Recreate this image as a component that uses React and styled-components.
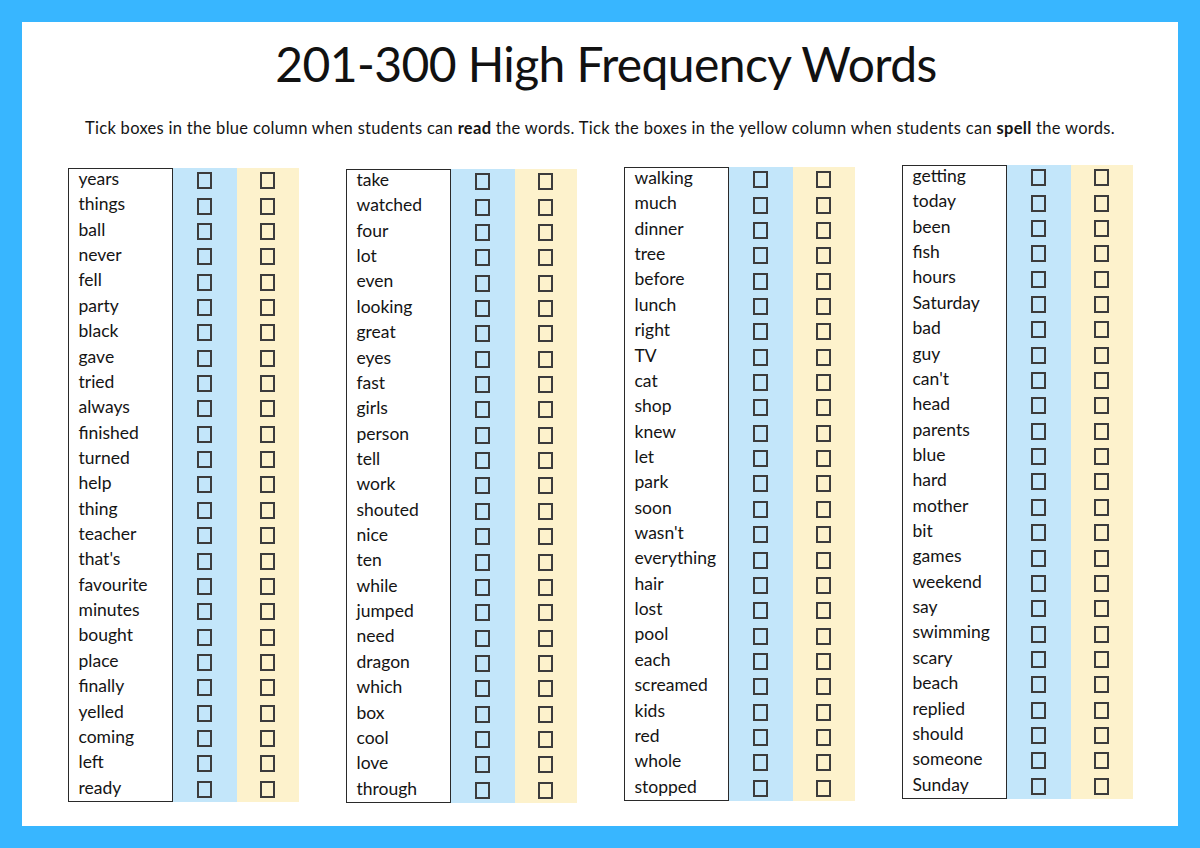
import { createGlobalStyle, styled } from "styled-components";

const GlobalStyle = createGlobalStyle`
  html, body {
    margin: 0;
    padding: 0;
  }

  body {
    font-family: Lato, "Noto Sans", sans-serif;
    color: #141414;
  }
`;

const StFrame = styled.div`
  width: 1200px;
  height: 848px;
  box-sizing: border-box;
  padding: 22px;

  background-color: #38b6ff;
`;

const StSheet = styled.div`
  height: 100%;

  display: flex;
  flex-direction: column;
  align-items: center;

  background-color: #ffffff;
`;

const StTitle = styled.h1`
  margin: 18px 0 0 12px;

  font-size: 48px;
  font-weight: 400;
  line-height: 1;
  letter-spacing: -0.6px;
  color: #111111;
`;

const StNote = styled.p`
  margin: 30px 0 0;

  font-size: 16.5px;
  line-height: 20px;
  letter-spacing: 0.3px;

  b {
    font-weight: 700;
  }
`;

const StColumns = styled.div`
  display: flex;
  gap: 47px;

  margin-top: 27px;
`;

const StGroup = styled.div`
  display: flex;
  align-items: flex-start;

  margin-top: ${(props) => props.offset}px;
`;

const StWordBox = styled.div`
  width: 105px;
  height: 634px;
  box-sizing: border-box;

  border: 1.5px solid #2a2a2a;
`;

const StWord = styled.div`
  height: 25.36px;

  padding-left: 10px;

  font-size: 17.5px;
  line-height: 20px;
  white-space: nowrap;
`;

const StStrip = styled.div`
  width: ${(props) => props.width}px;
  height: 634px;

  display: flex;
  flex-direction: column;
  align-items: center;

  background-color: ${(props) => props.color};
`;

const StCheckRow = styled.div`
  height: 25.36px;

  display: flex;
  align-items: center;
`;

const StCheckbox = styled.div`
  width: 15px;
  height: 17px;
  box-sizing: border-box;

  border: 2px solid #3c3c3c;
`;

const columns = [
  {
    offset: 3,
    words: [
      "years", "things", "ball", "never", "fell", "party", "black", "gave",
      "tried", "always", "finished", "turned", "help", "thing", "teacher",
      "that's", "favourite", "minutes", "bought", "place", "finally",
      "yelled", "coming", "left", "ready",
    ],
  },
  {
    offset: 4,
    words: [
      "take", "watched", "four", "lot", "even", "looking", "great", "eyes",
      "fast", "girls", "person", "tell", "work", "shouted", "nice", "ten",
      "while", "jumped", "need", "dragon", "which", "box", "cool", "love",
      "through",
    ],
  },
  {
    offset: 2,
    words: [
      "walking", "much", "dinner", "tree", "before", "lunch", "right", "TV",
      "cat", "shop", "knew", "let", "park", "soon", "wasn't", "everything",
      "hair", "lost", "pool", "each", "screamed", "kids", "red", "whole",
      "stopped",
    ],
  },
  {
    offset: 0,
    words: [
      "getting", "today", "been", "fish", "hours", "Saturday", "bad", "guy",
      "can't", "head", "parents", "blue", "hard", "mother", "bit", "games",
      "weekend", "say", "swimming", "scary", "beach", "replied", "should",
      "someone", "Sunday",
    ],
  },
];

function Strip({ color, width, count }) {
  return (
    <StStrip color={color} width={width}>
      {Array.from({ length: count }, (_, i) => (
        <StCheckRow key={i}>
          <StCheckbox />
        </StCheckRow>
      ))}
    </StStrip>
  );
}

function App() {
  return (
    <>
      <GlobalStyle />
      <StFrame>
        <StSheet>
          <StTitle>201-300 High Frequency Words</StTitle>
          <StNote>
            Tick boxes in the blue column when students can <b>read</b> the
            words. Tick the boxes in the yellow column when students can{" "}
            <b>spell</b> the words.
          </StNote>
          <StColumns>
            {columns.map((col, i) => (
              <StGroup key={i} offset={col.offset}>
                <StWordBox>
                  {col.words.map((word) => (
                    <StWord key={word}>{word}</StWord>
                  ))}
                </StWordBox>
                <Strip color="#c3e6fa" width={64} count={col.words.length} />
                <Strip color="#fdf2cc" width={62} count={col.words.length} />
              </StGroup>
            ))}
          </StColumns>
        </StSheet>
      </StFrame>
    </>
  );
}

export default App;
